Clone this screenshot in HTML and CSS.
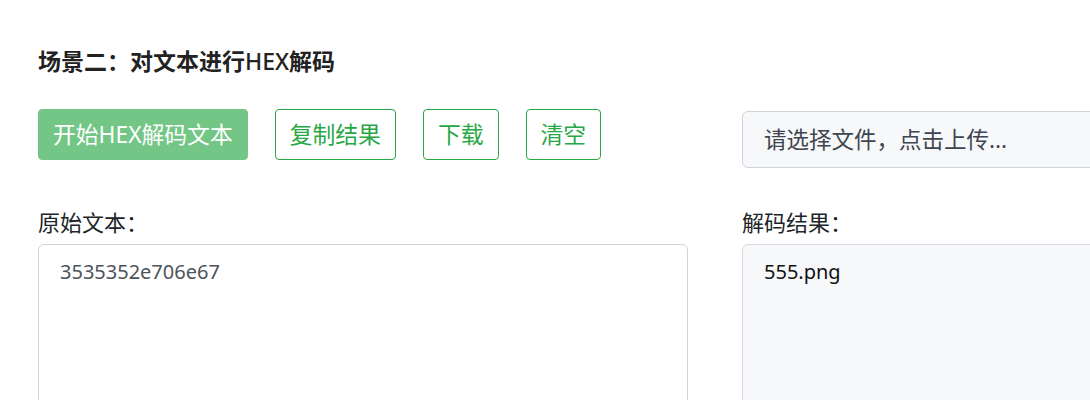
FILE: index.html
```html
<!DOCTYPE html>
<html lang="zh-CN">
<head>
<meta charset="utf-8">
<title>HEX解码</title>
<link rel="stylesheet" href="styles.css">
</head>
<body>
<div class="page">
  <h2 class="title">场景二：对文本进行<span class="latin">HEX</span>解码</h2>
  <div class="grid">
    <div class="btns">
      <button class="btn btn-primary">开始HEX解码文本</button>
      <button class="btn btn-outline">复制结果</button>
      <button class="btn btn-outline">下载</button>
      <button class="btn btn-outline">清空</button>
    </div>
    <div class="file">请选择文件，点击上传...</div>
    <div class="field">
      <label class="label">原始文本：</label>
      <textarea class="area">3535352e706e67</textarea>
    </div>
    <div class="field">
      <label class="label">解码结果：</label>
      <div class="area result">555.png</div>
    </div>
  </div>
</div>
</body>
</html>
```
FILE: styles.css
```css
html, body {
  margin: 0;
  padding: 0;
  background: #fff;
  overflow: hidden;
}
body {
  font-family: "Noto Sans", "Noto Sans CJK SC", sans-serif;
  color: #212529;
}
.page {
  padding: 45px 0 0 38px;
}
.title {
  margin: 0;
  font-size: 23px;
  line-height: 33px;
  font-weight: 700;
  color: #222;
}
.title .latin {
  font-weight: 500;
}
.grid {
  margin-top: 31px;
  display: grid;
  grid-template-columns: 650px 650px;
  column-gap: 54px;
  align-items: start;
}
.btns {
  display: flex;
  gap: 27px;
}
.btn {
  font-family: "Noto Sans", "Noto Sans CJK SC", sans-serif;
  font-size: 22.8px;
  line-height: 33px;
  padding: 8px 14px;
  border-radius: 4px;
  border: 1px solid #28a745;
  background: #fff;
  color: #28a745;
  cursor: pointer;
}
.btn-primary {
  background: #73c686;
  border-color: #73c686;
  color: #fff;
}
.file {
  margin-top: 2px;
  height: 55px;
  line-height: 55px;
  border: 1px solid #d0d5dc;
  border-radius: 6px;
  background: #f7f8fa;
  padding-left: 21px;
  font-size: 22.5px;
  color: #3e4550;
}
.field {
  margin-top: 38px;
  display: flex;
  flex-direction: column;
}
.label {
  font-size: 22px;
  line-height: 33px;
  color: #212529;
  margin-bottom: 5px;
}
.area {
  box-sizing: border-box;
  height: 300px;
  border: 1px solid #ced4da;
  border-radius: 6px;
  padding: 12px 21px;
  font-family: "Noto Sans", "Noto Sans CJK SC", sans-serif;
  font-size: 20px;
  line-height: 30px;
  color: #4d535a;
  background: #fff;
  resize: none;
  outline: none;
  margin: 0;
}
.result {
  background: #f7f8fa;
  border-color: #d6dae0;
  color: #111;
}
```
